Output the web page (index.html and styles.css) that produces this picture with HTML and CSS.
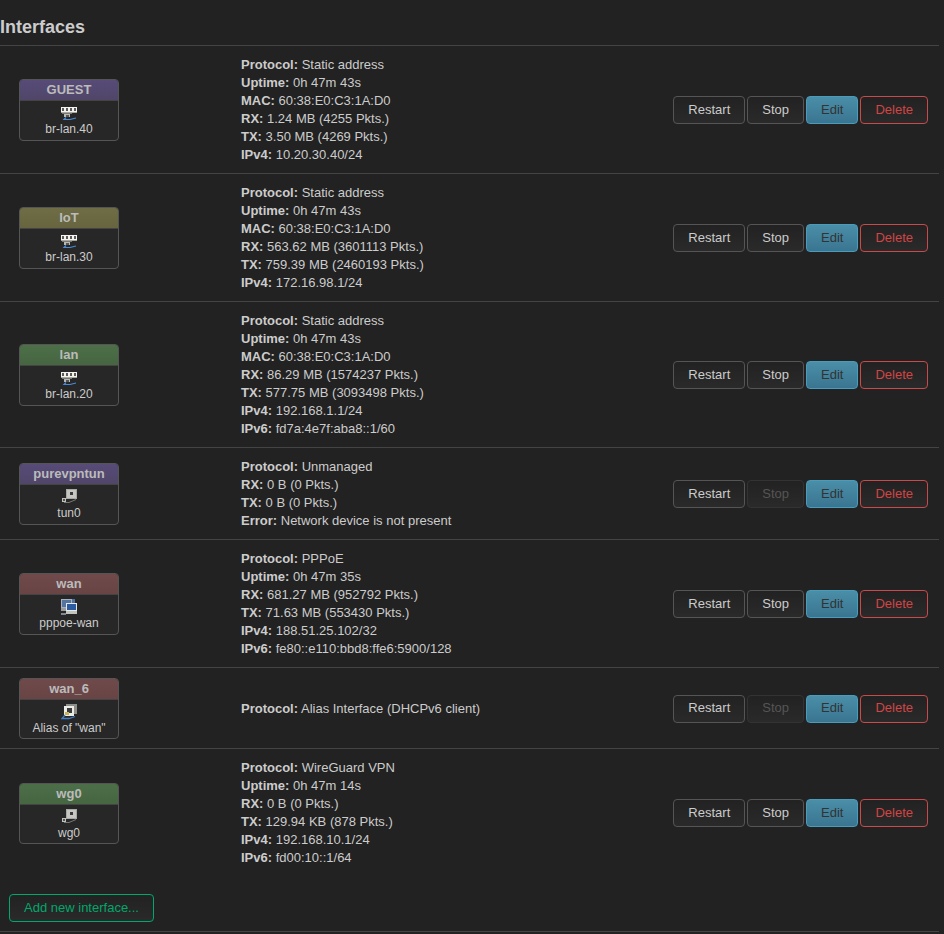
FILE: index.html
```html
<!DOCTYPE html>
<html lang="en">
<head>
<meta charset="utf-8">
<title>Interfaces</title>
<link rel="stylesheet" href="styles.css">
</head>
<body>
<svg class="defs" width="0" height="0" aria-hidden="true">
<defs>
<symbol id="i-switch" viewBox="0 0 16 16">
<rect x="0" y="2" width="16" height="6" fill="#f4f4ec"/>
<path d="M1 3h2v3H1zM5 3h2v3H5zM9 3h2v3H9zM13 3h2v3h-2z" fill="#5a5a5e"/>
<rect x="0" y="7" width="16" height="1" fill="#a8a89c"/>
<rect x="1" y="8" width="10" height="1" fill="#77777a"/>
<rect x="3" y="9" width="6" height="3" fill="#b9b9b2"/>
<rect x="5" y="10" width="3" height="2" fill="#55555a"/>
<path d="M5 12.500L3 14.500h6l6-1.500" fill="none" stroke="#4a8ad4" stroke-width="1.200"/>
</symbol>
<symbol id="i-tunnel" viewBox="0 0 16 16">
<rect x="5" y="0" width="11" height="10" fill="#a8a8a4"/>
<rect x="6" y="1" width="9" height="8" fill="#c6c6c2"/>
<rect x="9" y="3" width="3" height="3" fill="#3a3a3a"/>
<rect x="1" y="9" width="4" height="4" fill="#c2c2bd"/>
<rect x="2" y="10" width="2" height="2" fill="#555"/>
<path d="M3 13.500h5l7-3" fill="none" stroke="#777" stroke-width="1"/>
</symbol>
<symbol id="i-wan" viewBox="0 0 16 16">
<rect x="0" y="0" width="11" height="9" fill="#aab0bc"/>
<rect x="1" y="1" width="9" height="7" fill="#55739f"/>
<rect x="0" y="9" width="5" height="3" fill="#9a9a9a"/>
<rect x="0" y="14" width="5" height="2" fill="#7f8794"/>
<rect x="11" y="0" width="3" height="4" fill="#4f6f9f"/>
<rect x="5" y="4" width="11" height="8" fill="#e6e8ec"/>
<rect x="6" y="5" width="9" height="6" fill="#2c5c9f"/>
<rect x="5" y="12" width="11" height="3" fill="#c4c4be"/>
</symbol>
<symbol id="i-alias" viewBox="0 0 16 16">
<rect x="5" y="0" width="11" height="10" fill="#8e8e8a"/>
<rect x="3" y="2" width="10" height="10" fill="#ecece6"/>
<rect x="6" y="4" width="5" height="5" fill="#3a3a3a"/>
<rect x="4" y="8" width="4" height="3" fill="#c9b25a"/>
<path d="M4 11L1 14.500h7l6-2" fill="none" stroke="#3f7cc4" stroke-width="1.300"/>
</symbol>
</defs>
</svg>

<main class="page">
<h3 class="title">Interfaces</h3>

<section class="row">
<div class="col-box"><div class="ifbox"><div class="ifname guest">GUEST</div><div class="ifbody"><svg class="icon"><use href="#i-switch"/></svg><span class="dev">br-lan.40</span></div></div></div>
<div class="col-info">
<div><b>Protocol:</b> Static address</div>
<div><b>Uptime:</b> 0h 47m 43s</div>
<div><b>MAC:</b> 60:38:E0:C3:1A:D0</div>
<div><b>RX:</b> 1.24 MB (4255 Pkts.)</div>
<div><b>TX:</b> 3.50 MB (4269 Pkts.)</div>
<div><b>IPv4:</b> 10.20.30.40/24</div>
</div>
<div class="col-act"><button class="btn">Restart</button><button class="btn">Stop</button><button class="btn edit">Edit</button><button class="btn del">Delete</button></div>
</section>

<section class="row">
<div class="col-box"><div class="ifbox"><div class="ifname iot">IoT</div><div class="ifbody"><svg class="icon"><use href="#i-switch"/></svg><span class="dev">br-lan.30</span></div></div></div>
<div class="col-info">
<div><b>Protocol:</b> Static address</div>
<div><b>Uptime:</b> 0h 47m 43s</div>
<div><b>MAC:</b> 60:38:E0:C3:1A:D0</div>
<div><b>RX:</b> 563.62 MB (3601113 Pkts.)</div>
<div><b>TX:</b> 759.39 MB (2460193 Pkts.)</div>
<div><b>IPv4:</b> 172.16.98.1/24</div>
</div>
<div class="col-act"><button class="btn">Restart</button><button class="btn">Stop</button><button class="btn edit">Edit</button><button class="btn del">Delete</button></div>
</section>

<section class="row">
<div class="col-box"><div class="ifbox"><div class="ifname green">lan</div><div class="ifbody"><svg class="icon"><use href="#i-switch"/></svg><span class="dev">br-lan.20</span></div></div></div>
<div class="col-info">
<div><b>Protocol:</b> Static address</div>
<div><b>Uptime:</b> 0h 47m 43s</div>
<div><b>MAC:</b> 60:38:E0:C3:1A:D0</div>
<div><b>RX:</b> 86.29 MB (1574237 Pkts.)</div>
<div><b>TX:</b> 577.75 MB (3093498 Pkts.)</div>
<div><b>IPv4:</b> 192.168.1.1/24</div>
<div><b>IPv6:</b> fd7a:4e7f:aba8::1/60</div>
</div>
<div class="col-act"><button class="btn">Restart</button><button class="btn">Stop</button><button class="btn edit">Edit</button><button class="btn del">Delete</button></div>
</section>

<section class="row">
<div class="col-box"><div class="ifbox"><div class="ifname guest">purevpntun</div><div class="ifbody"><svg class="icon"><use href="#i-tunnel"/></svg><span class="dev">tun0</span></div></div></div>
<div class="col-info">
<div><b>Protocol:</b> Unmanaged</div>
<div><b>RX:</b> 0 B (0 Pkts.)</div>
<div><b>TX:</b> 0 B (0 Pkts.)</div>
<div><b>Error:</b> Network device is not present</div>
</div>
<div class="col-act"><button class="btn">Restart</button><button class="btn off" disabled>Stop</button><button class="btn edit">Edit</button><button class="btn del">Delete</button></div>
</section>

<section class="row">
<div class="col-box"><div class="ifbox"><div class="ifname red">wan</div><div class="ifbody"><svg class="icon"><use href="#i-wan"/></svg><span class="dev">pppoe-wan</span></div></div></div>
<div class="col-info">
<div><b>Protocol:</b> PPPoE</div>
<div><b>Uptime:</b> 0h 47m 35s</div>
<div><b>RX:</b> 681.27 MB (952792 Pkts.)</div>
<div><b>TX:</b> 71.63 MB (553430 Pkts.)</div>
<div><b>IPv4:</b> 188.51.25.102/32</div>
<div><b>IPv6:</b> fe80::e110:bbd8:ffe6:5900/128</div>
</div>
<div class="col-act"><button class="btn">Restart</button><button class="btn">Stop</button><button class="btn edit">Edit</button><button class="btn del">Delete</button></div>
</section>

<section class="row">
<div class="col-box"><div class="ifbox"><div class="ifname red">wan_6</div><div class="ifbody"><svg class="icon"><use href="#i-alias"/></svg><span class="dev">Alias of "wan"</span></div></div></div>
<div class="col-info">
<div><b>Protocol:</b> Alias Interface (DHCPv6 client)</div>
</div>
<div class="col-act"><button class="btn">Restart</button><button class="btn off" disabled>Stop</button><button class="btn edit">Edit</button><button class="btn del">Delete</button></div>
</section>

<section class="row last">
<div class="col-box"><div class="ifbox"><div class="ifname green">wg0</div><div class="ifbody"><svg class="icon"><use href="#i-tunnel"/></svg><span class="dev">wg0</span></div></div></div>
<div class="col-info">
<div><b>Protocol:</b> WireGuard VPN</div>
<div><b>Uptime:</b> 0h 47m 14s</div>
<div><b>RX:</b> 0 B (0 Pkts.)</div>
<div><b>TX:</b> 129.94 KB (878 Pkts.)</div>
<div><b>IPv4:</b> 192.168.10.1/24</div>
<div><b>IPv6:</b> fd00:10::1/64</div>
</div>
<div class="col-act"><button class="btn">Restart</button><button class="btn">Stop</button><button class="btn edit">Edit</button><button class="btn del">Delete</button></div>
</section>

<div class="footer"><button class="btn add">Add new interface...</button></div>
</main>
</body>
</html>
```
FILE: styles.css
```css
html, body {
  margin: 0;
  padding: 0;
  background: #222;
  height: 934px;
  overflow: hidden;
}
body {
  color: #ccc;
  font: 13px/18px "Liberation Sans", Arial, sans-serif;
}
.defs { position: absolute; }
.page { width: 939px; }
.title {
  margin: 0;
  height: 46px;
  box-sizing: border-box;
  padding-top: 17px;
  font-size: 18px;
  line-height: 20px;
  font-weight: bold;
  color: #ccc;
  border-bottom: 1px solid #444;
}
.row {
  display: grid;
  grid-template-columns: 241px 1fr auto;
  align-items: center;
  padding: 10px 11px 9px 0;
  border-bottom: 1px solid #444;
}
.row.last { border-bottom: 0; }
.col-box { padding-left: 19px; }
.ifbox {
  box-sizing: border-box;
  width: 100px;
  height: 61.4px;
  border: 1px solid #555;
  border-radius: 4px;
  background: #272727;
  overflow: hidden;
  text-align: center;
}
.ifname {
  height: 20px;
  line-height: 20px;
  font-weight: bold;
  font-size: 13px;
  color: #bbb;
  border-bottom: 1px solid #444;
}
.guest { background: linear-gradient(#574b78, #504668); }
.iot { background: linear-gradient(#6e6d45, #66653f); }
.green { background: linear-gradient(#4c6f48, #466541); }
.red { background: linear-gradient(#704a4a, #684444); }
.ifbody {
  display: flex;
  flex-direction: column;
  align-items: center;
  padding-top: 4px;
}
.icon { width: 16px; height: 16px; display: block; }
.dev { font-size: 12px; line-height: 15px; margin-top: 1px; }
.col-act { display: flex; gap: 2px; }
.btn {
  box-sizing: border-box;
  height: 28px;
  padding: 0 14px 2px;
  font: 13px "Liberation Sans", Arial, sans-serif;
  color: #ccc;
  background: linear-gradient(#222, #2a2a2a);
  border: 1px solid #555;
  border-radius: 4px;
}
.edit {
  color: #333;
  background: linear-gradient(#4a8ea8, #3a7590);
  border-color: #4a9cbc;
}
.del { color: #d04545; border-color: #c84a4a; }
.off { color: #555; border-color: #333; }
.add {
  color: #00a86b;
  border-color: #00a86b;
  width: 145px;
  padding: 0 0 2px;
}
.footer {
  padding: 18px 0 9px 9px;
  border-bottom: 1px solid #444;
  line-height: 0;
}
```
